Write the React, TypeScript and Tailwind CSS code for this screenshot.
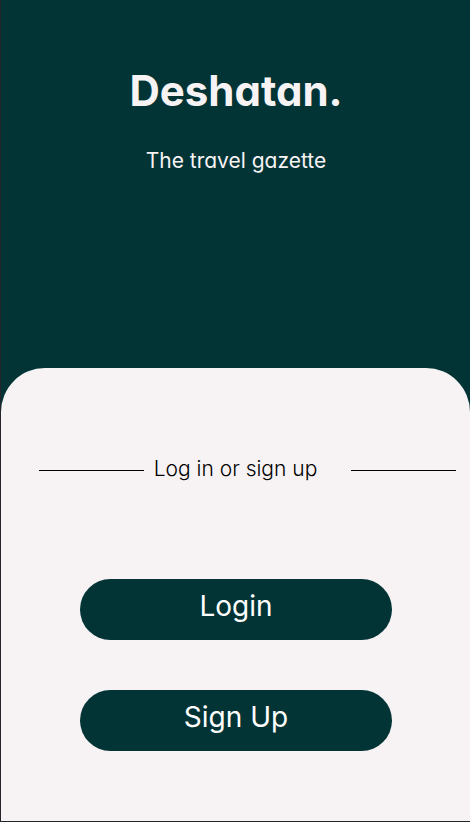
const actions = ["Login", "Sign Up"];

export default function App() {
  return (
    <main className="flex min-h-screen flex-col border-b border-l border-[#26242b] bg-[#023436] font-['Inter',sans-serif] [font-feature-settings:'cv11']">
      <header className="flex h-[368px] flex-col items-center pt-[63px] pl-px text-[#f7f3f4]">
        <h1 className="text-[42px] leading-[56px] font-bold">Deshatan.</h1>
        <p className="mt-[26px] text-[21px] leading-8">The travel gazette</p>
      </header>
      <section className="flex flex-1 flex-col rounded-t-[44px] bg-[#f7f3f4] pt-[86px] pb-[70px]">
        <div className="flex items-center pr-[14px] pl-[38px]">
          <span className="h-px flex-1 bg-black" />
          <p className="mr-[34px] ml-[10px] pb-[2px] text-[21px] leading-[30px] font-light whitespace-nowrap text-black">
            Log in or sign up
          </p>
          <span className="h-px flex-1 bg-black" />
        </div>
        <div className="mt-[93px] flex flex-col items-center gap-[50px] pl-px">
          {actions.map((label) => (
            <button
              key={label}
              type="button"
              className="h-[61px] w-2/3 rounded-full bg-[#023436] pb-2 text-[28px] leading-10 text-white"
            >
              {label}
            </button>
          ))}
        </div>
      </section>
    </main>
  );
}
